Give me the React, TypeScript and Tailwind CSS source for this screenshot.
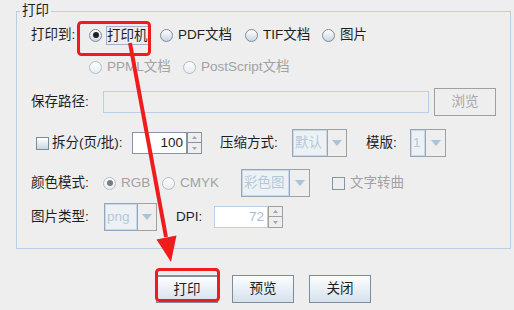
import React from "react";

function Radio({ checked = false, disabled = false }: { checked?: boolean; disabled?: boolean }) {
  return (
    <span
      className={
        "flex h-[13px] w-[13px] shrink-0 items-center justify-center rounded-full border " +
        (disabled
          ? "border-[#b3bcc6] bg-linear-to-b from-white to-[#e6ecf2]"
          : "border-[#7d8b99] bg-linear-to-b from-white to-[#c9d6e3]")
      }
    >
      {checked && (
        <span
          className={
            "h-[6px] w-[6px] rounded-full " + (disabled ? "bg-[#7a7a7a]" : "bg-[#1f1f1f]")
          }
        />
      )}
    </span>
  );
}

function Check({ disabled = false }: { disabled?: boolean }) {
  return (
    <span
      className={
        "block h-[13px] w-[13px] shrink-0 border " +
        (disabled
          ? "border-[#8595a5] bg-[#eeeeee]"
          : "border-[#7d8b99] bg-linear-to-b from-white to-[#c9d6e3]")
      }
    />
  );
}

function Caret() {
  return (
    <svg width="10" height="6" viewBox="0 0 10 6">
      <path d="M0 0 L10 0 L5 6 Z" fill="#a9c3db" />
    </svg>
  );
}

function Combo({ text, className, arrow = "w-[19px]" }: { text: string; className: string; arrow?: string }) {
  return (
    <div className={"flex h-[28px] shrink-0 " + className}>
      <div className="flex min-w-0 flex-1 items-center overflow-hidden whitespace-nowrap border border-[#94a7ba] bg-[#eef1f4] px-[2px] text-[#b4c8dc] shadow-[inset_0_0_0_1px_#cad8e6]">
        {text}
      </div>
      <div className={"flex shrink-0 items-center justify-center border border-l-0 border-[#a0a0a0] " + arrow}>
        <Caret />
      </div>
    </div>
  );
}

function Spinner({ enabled = false }: { enabled?: boolean }) {
  const b = enabled ? "border-[#8592a0]" : "border-[#a0a0a0]";
  return (
    <div className="flex h-[22px] w-[15px] shrink-0 flex-col">
      <div className={"flex h-[11px] items-center justify-center border " + b}>
        <svg width="5" height="3" viewBox="0 0 5 3">
          <path d="M0 3 L5 3 L2.5 0 Z" fill="#9aa6b2" />
        </svg>
      </div>
      <div className={"flex h-[11px] items-center justify-center border border-t-0 " + b}>
        <svg width="5" height="3" viewBox="0 0 5 3">
          <path d="M0 0 L5 0 L2.5 3 Z" fill="#9aa6b2" />
        </svg>
      </div>
    </div>
  );
}

function Option({ label, className, checked, disabled }: { label: string; className: string; checked?: boolean; disabled?: boolean }) {
  return (
    <div className={"flex items-center whitespace-nowrap " + className}>
      <Radio checked={checked} disabled={disabled} />
      <span className={"ml-[5px] " + (disabled ? "text-[#a2a2a2]" : "")}>{label}</span>
    </div>
  );
}

export default function App() {
  return (
    <div className="relative h-[310px] w-[514px] overflow-hidden bg-[#eeeeee] font-['Liberation_Sans','Noto_Sans_CJK_SC',sans-serif] text-[13.5px] leading-4 text-[#1e1e1e]">
      <div className="relative ml-[16px] mt-[11px] h-[238px] w-[495px] border border-[#b8cfe5]">
        <span className="absolute -top-[9px] left-[3px] bg-[#eeeeee] px-[2px]">打印</span>
        <div className="flex flex-col pl-[14px] pt-[11px]">
          <div className="flex h-6 items-center">
            <span className="w-[58px]">打印到:</span>
            <div className="flex w-[71px] items-center">
              <Radio checked />
              <span className="ml-[4px] h-[19px] border border-[#a3b3c4] leading-[17px]">打印机</span>
            </div>
            <Option label="PDF文档" className="w-[85px]" />
            <Option label="TIF文档" className="w-[77px]" />
            <Option label="图片" className="" />
          </div>

          <div className="mt-2 flex h-6 items-center pl-[58px]">
            <Option label="PPML文档" className="w-[94px]" disabled />
            <Option label="PostScript文档" className="" disabled />
          </div>

          <div className="mt-[9px] flex h-7 items-center">
            <span className="w-[72px]">保存路径:</span>
            <div className="h-[22px] w-[326px] border border-[#b8cfe5]" />
            <div className="ml-[5px] flex h-[28px] w-[62px] items-center justify-center border border-[#a0a0a0] text-[#a8a8a8]">
              浏览
            </div>
          </div>

          <div className="mt-[13px] flex h-7 items-center">
            <span className="ml-[5px]">
              <Check />
            </span>
            <span className="ml-[3px] w-[80px] whitespace-nowrap">拆分(页/批):</span>
            <div className="flex h-[22px] w-[55px] items-center justify-end border border-[#8595a5] bg-white pr-[3px]">
              100
            </div>
            <Spinner enabled />
            <span className="ml-[18px] w-[72px]">压缩方式:</span>
            <Combo text="默认" className="w-[55px]" />
            <span className="ml-[19px] w-[44px]">模版:</span>
            <Combo text="1" className="w-[36px]" arrow="w-[20px]" />
          </div>

          <div className="mt-3 flex h-7 items-center">
            <span className="w-[72px]">颜色模式:</span>
            <Option label="RGB" className="w-[59px]" checked disabled />
            <Option label="CMYK" className="w-[79px]" disabled />
            <Combo text="彩色图" className="w-[69px]" arrow="w-[20px]" />
            <span className="ml-[22px]">
              <Check disabled />
            </span>
            <span className="ml-[5px] text-[#a2a2a2]">文字转曲</span>
          </div>

          <div className="mt-[6px] flex h-7 items-center">
            <span className="w-[73px]">图片类型:</span>
            <Combo text="png" className="w-[53px]" />
            <span className="ml-[19px] w-[38px]">DPI:</span>
            <div className="flex h-[22px] w-[54px] items-center justify-end border border-[#b8cfe5] bg-white pr-[3px] text-[#a6bdd3]">
              72
            </div>
            <Spinner />
          </div>
        </div>
      </div>

      <div className="mt-[26px] flex">
        <div className="ml-[156px] flex h-[28px] w-[62px] items-center justify-center border border-t-2 border-[#7d8c9b] border-t-[#828f9c] bg-linear-to-b from-[#fdfdfe] to-[#d5e1ed]">
          打印
        </div>
        <div className="ml-[14px] flex h-[28px] w-[62px] items-center justify-center border border-[#7d8c9b] bg-linear-to-b from-[#fdfdfe] to-[#d5e1ed]">
          预览
        </div>
        <div className="ml-[15px] flex h-[28px] w-[62px] items-center justify-center border border-[#7d8c9b] bg-linear-to-b from-[#fdfdfe] to-[#d5e1ed]">
          关闭
        </div>
      </div>

      {/* red annotations */}
      <svg className="pointer-events-none absolute left-0 top-0" width="514" height="310" viewBox="0 0 514 310">
        <rect x="78.5" y="22.5" width="71" height="32" rx="3" fill="none" stroke="#ee1c1c" strokeWidth="3" />
        <rect x="156.5" y="269.5" width="62" height="31" rx="3" fill="none" stroke="#ee1c1c" strokeWidth="3" />
        <line x1="130" y1="43" x2="166" y2="237" stroke="#ee1c1c" strokeWidth="4" />
        <path d="M171 262 L176.5 235.5 L156.5 239.5 Z" fill="#ee1c1c" />
      </svg>
    </div>
  );
}
